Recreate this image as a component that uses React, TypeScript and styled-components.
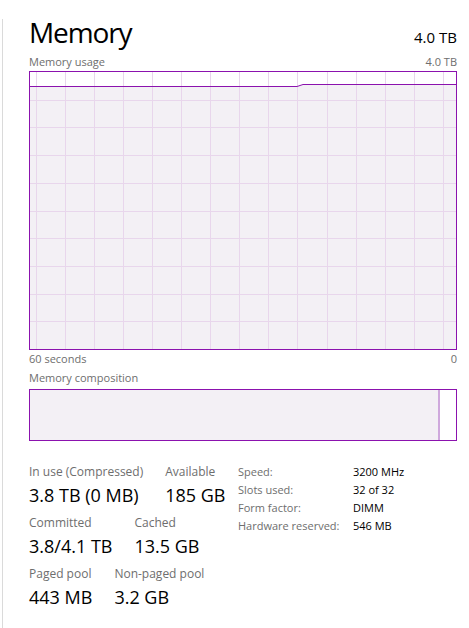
import React from 'react'
import styled, { createGlobalStyle } from 'styled-components'

const GlobalStyle = createGlobalStyle`
  html, body {
    margin: 0;
    padding: 0;
    background: #ffffff;
  }
  body {
    font-family: "Segoe UI", "Open Sans", "Noto Sans", sans-serif;
    color: #000000;
  }
`

const PURPLE = '#8b12ae'
const GRID = '#e8d6ec'
const FILL = '#f3f0f5'

const Frame = styled.div`
  margin: 19px 0 0 2px;
  border-left: 1px solid #dadada;
  padding: 0 12px 24px 26px;
  min-height: 585px;
  box-sizing: border-box;
`

const Header = styled.div`
  display: flex;
  justify-content: space-between;
  align-items: baseline;
  height: 25px;
`

const Title = styled.h1`
  margin: 0;
  font-size: 28px;
  font-weight: 400;
  line-height: 25px;
  letter-spacing: -1.1px;
  padding-top: 1px;
`

const Total = styled.span`
  font-size: 15px;
  line-height: 25px;
`

const Caption = styled.div<{ $top?: number }>`
  display: flex;
  justify-content: space-between;
  margin-top: ${(p) => p.$top ?? 0}px;
  font-size: 11px;
  line-height: 15px;
  color: #6e6e6e;
`

const ChartBox = styled.div`
  margin-top: 2px;
  border: 1px solid ${PURPLE};
  height: 277px;
  background: #ffffff;
  svg {
    display: block;
  }
`

const CompositionBox = styled.div`
  margin-top: 4px;
  border: 1px solid ${PURPLE};
  height: 50px;
  display: flex;
  background: #ffffff;
`

const InUse = styled.div`
  background: ${FILL};
  border-right: 2px solid #cfa9dd;
  height: 100%;
`

const Stats = styled.div`
  display: flex;
  margin-top: 23px;
`

const StatsLeft = styled.div`
  width: 209px;
  display: flex;
  flex-direction: column;
  gap: 8px;
`

const StatRow = styled.div`
  display: flex;
  gap: 22px;
`

const Stat = styled.div`
  display: flex;
  flex-direction: column;
  gap: 3px;
`

const StatLabel = styled.span`
  font-size: 12px;
  line-height: 16px;
  color: #6e6e6e;
  white-space: nowrap;
`

const StatValue = styled.span`
  font-size: 18px;
  line-height: 24px;
  white-space: nowrap;
`

const Specs = styled.div`
  display: grid;
  grid-template-columns: 115px auto;
  font-size: 11px;
  line-height: 18px;
  margin-top: -1px;
  align-content: start;
`

const SpecLabel = styled.span`
  color: #6e6e6e;
`

const SpecValue = styled.span`
  color: #000000;
`

const W = 426
const H = 277

function UsageChart() {
  const verticals = Array.from({ length: 15 }, (_, k) => Math.round(6 + 29.05 * k) + 0.5)
  const horizontals = Array.from({ length: 9 }, (_, k) => Math.round(27.7 * (k + 1)) + 0.5)
  const line = 'M0,14.5 L267,14.5 L273,12.5 L426,12.5'
  const area = `${line} L426,${H} L0,${H} Z`
  return (
    <svg width={W} height={H} viewBox={`0 0 ${W} ${H}`}>
      <path d={area} fill={FILL} />
      {verticals.map((x) => (
        <line key={`v${x}`} x1={x} x2={x} y1={0} y2={H} stroke={GRID} strokeWidth={1} />
      ))}
      {horizontals.map((y) => (
        <line key={`h${y}`} x1={0} x2={W} y1={y} y2={y} stroke={GRID} strokeWidth={1} />
      ))}
      <path d={line} fill="none" stroke={PURPLE} strokeWidth={1} />
    </svg>
  )
}

const stats = [
  [
    { label: 'In use (Compressed)', value: '3.8 TB (0 MB)' },
    { label: 'Available', value: '185 GB' },
  ],
  [
    { label: 'Committed', value: '3.8/4.1 TB' },
    { label: 'Cached', value: '13.5 GB' },
  ],
  [
    { label: 'Paged pool', value: '443 MB' },
    { label: 'Non-paged pool', value: '3.2 GB' },
  ],
]

const specs = [
  ['Speed:', '3200 MHz'],
  ['Slots used:', '32 of 32'],
  ['Form factor:', 'DIMM'],
  ['Hardware reserved:', '546 MB'],
]

const App = () => {
  const usedPct = 408 / 426
  return (
    <>
      <GlobalStyle />
      <Frame>
        <Header>
          <Title>Memory</Title>
          <Total>4.0 TB</Total>
        </Header>

        <Caption $top={10}>
          <span>Memory usage</span>
          <span>4.0 TB</span>
        </Caption>
        <ChartBox>
          <UsageChart />
        </ChartBox>
        <Caption $top={1}>
          <span>60 seconds</span>
          <span>0</span>
        </Caption>

        <Caption $top={4}>
          <span>Memory composition</span>
        </Caption>
        <CompositionBox>
          <InUse style={{ width: `${usedPct * 100}%` }} />
        </CompositionBox>

        <Stats>
          <StatsLeft>
            {stats.map((row, i) => (
              <StatRow key={i}>
                {row.map((s) => (
                  <Stat key={s.label}>
                    <StatLabel>{s.label}</StatLabel>
                    <StatValue>{s.value}</StatValue>
                  </Stat>
                ))}
              </StatRow>
            ))}
          </StatsLeft>
          <Specs>
            {specs.map(([k, v]) => (
              <React.Fragment key={k}>
                <SpecLabel>{k}</SpecLabel>
                <SpecValue>{v}</SpecValue>
              </React.Fragment>
            ))}
          </Specs>
        </Stats>
      </Frame>
    </>
  )
}

export default App
